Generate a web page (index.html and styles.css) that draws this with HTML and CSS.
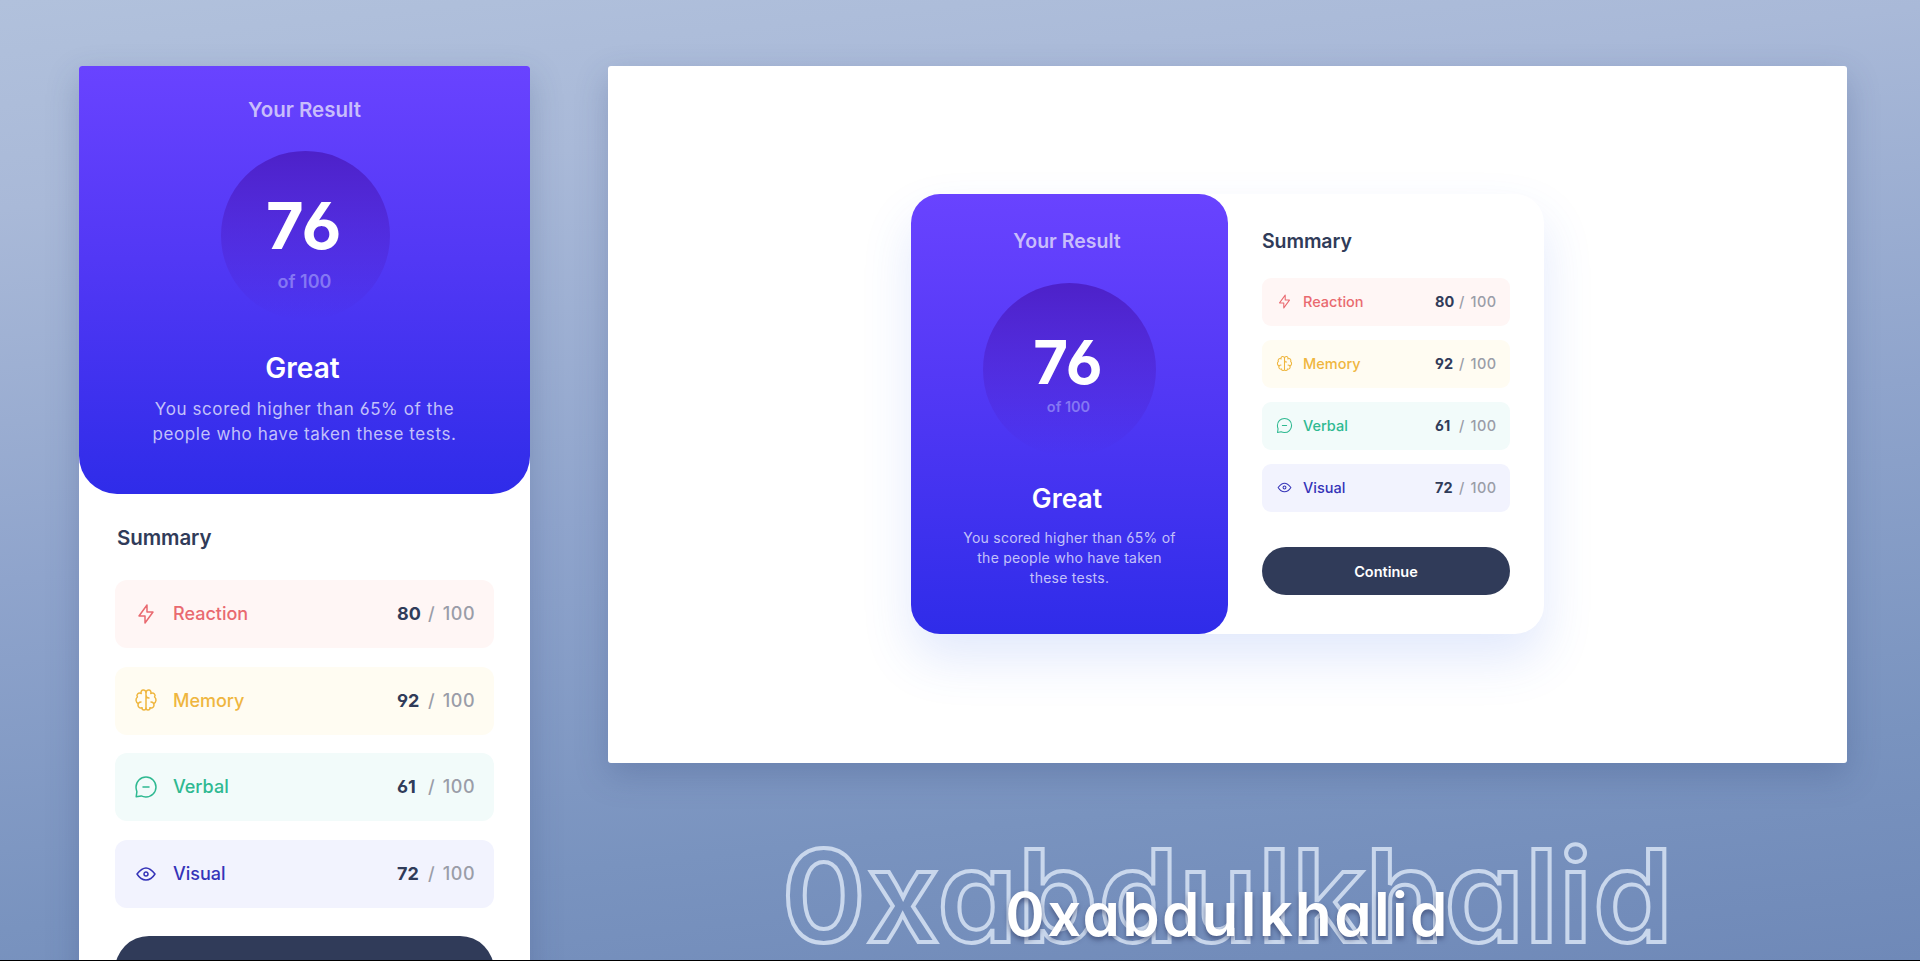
FILE: index.html
```html
<!DOCTYPE html>
<html lang="en">
<head>
<meta charset="utf-8">
<title>Results summary</title>
<link rel="stylesheet" href="styles.css">
</head>
<body>
<svg class="sprite" aria-hidden="true">
  <symbol id="reaction" viewBox="0 0 20 20"><path d="M10.833 8.333V2.5l-6.666 9.167h5V17.5l6.666-9.167h-5Z"/></symbol>
  <symbol id="memory" viewBox="0 0 20 20"><path d="M5.833 11.667a2.5 2.5 0 1 0 .834 4.858"/><path d="M3.553 13.004a3.333 3.333 0 0 1-.728-5.53m.025-.067a2.083 2.083 0 0 1 2.983-2.824m.199.054A2.083 2.083 0 1 1 10 3.75v12.917a1.667 1.667 0 0 1-3.333 0M10 5.833a2.5 2.5 0 0 0 2.5 2.5m1.667 3.334a2.5 2.5 0 1 1-.834 4.858"/><path d="M16.447 13.004a3.334 3.334 0 0 0 .728-5.53m-.025-.067a2.083 2.083 0 0 0-2.983-2.824M10 3.75a2.085 2.085 0 0 1 2.538-2.033 2.084 2.084 0 0 1 1.43 2.92m-.635 12.03a1.667 1.667 0 0 1-3.333 0"/></symbol>
  <symbol id="verbal" viewBox="0 0 20 20"><path d="M7.5 10h5M10 18.333A8.333 8.333 0 1 0 1.667 10c0 1.518.25 2.6.75 3.9l-.6 4.3 4.2-.75A8.295 8.295 0 0 0 10 18.333Z"/></symbol>
  <symbol id="visual" viewBox="0 0 20 20"><path d="M10 11.667a1.667 1.667 0 1 0 0-3.334 1.667 1.667 0 0 0 0 3.334Z"/><path d="M17.5 10c-1.574 2.492-4.402 5-7.5 5s-5.926-2.508-7.5-5C4.416 7.632 6.66 5 10 5s5.584 2.632 7.5 5Z"/></symbol>
</svg>
<div class="stage">
  <section class="mobile">
    <div class="result">
      <h2>Your Result</h2>
      <div class="score"><strong>76</strong><small>of 100</small></div>
      <h1>Great</h1>
      <p>You scored higher than 65% of the<br>people who have taken these tests.</p>
    </div>
    <div class="summary">
      <h3>Summary</h3>
      <ul>
        <li class="red"><svg><use href="#reaction"/></svg><span class="label">Reaction</span><b>80</b><i>/ 100</i></li>
        <li class="yellow"><svg><use href="#memory"/></svg><span class="label">Memory</span><b>92</b><i>/ 100</i></li>
        <li class="green"><svg><use href="#verbal"/></svg><span class="label">Verbal</span><b>61</b><i>/ 100</i></li>
        <li class="blue"><svg><use href="#visual"/></svg><span class="label">Visual</span><b>72</b><i>/ 100</i></li>
      </ul>
      <div class="button"></div>
    </div>
  </section>
  <div class="right">
    <section class="desktop">
      <div class="card">
        <div class="result">
          <h2>Your Result</h2>
          <div class="score"><strong>76</strong><small>of 100</small></div>
          <h1>Great</h1>
          <p>You scored higher than 65% of<br>the people who have taken<br>these tests.</p>
        </div>
        <div class="summary">
          <h3>Summary</h3>
          <ul>
            <li class="red"><svg><use href="#reaction"/></svg><span class="label">Reaction</span><b>80</b><i>/ 100</i></li>
            <li class="yellow"><svg><use href="#memory"/></svg><span class="label">Memory</span><b>92</b><i>/ 100</i></li>
            <li class="green"><svg><use href="#verbal"/></svg><span class="label">Verbal</span><b>61</b><i>/ 100</i></li>
            <li class="blue"><svg><use href="#visual"/></svg><span class="label">Visual</span><b>72</b><i>/ 100</i></li>
          </ul>
          <div class="button">Continue</div>
        </div>
      </div>
    </section>
    <div class="signature">
      <div class="outline">0xabdulkhalid</div>
      <div class="name">0xabdulkhalid</div>
    </div>
  </div>
</div>
</body>
</html>
```
FILE: styles.css
```css
* { box-sizing: border-box; margin: 0; padding: 0; }
body {
  width: 1920px;
  height: 961px;
  overflow: hidden;
  font-family: Inter, sans-serif;
  font-feature-settings: "ss01";
  background: #000;
}
.sprite { display: none; }
.stage {
  height: 960px;
  overflow: hidden;
  display: flex;
  gap: 78px;
  padding: 66px 73px 0 79px;
  background: linear-gradient(174deg, #b1c1dc 0%, #a9b9d8 18%, #8fa4cc 50%, #7993bf 80%, #6f89b8 100%);
}
.mobile {
  width: 451px;
  height: 1000px;
  flex: none;
  background: #fff;
  border-radius: 3px;
  overflow: hidden;
  box-shadow: 0 12px 32px rgba(50, 70, 120, .26);
}
.result {
  display: flex;
  flex-direction: column;
  align-items: center;
  text-align: center;
  color: #fff;
  background: linear-gradient(#6943ff, #5238f5 45%, #2f2ce9);
}
.result h2, .result h1, .summary h3 { font-weight: 600; }
.result h2 { color: #c8bdfb; }
.result p { color: #c3c1fa; white-space: nowrap; }
.score {
  display: flex;
  flex-direction: column;
  align-items: center;
  border-radius: 50%;
  background: linear-gradient(#4d21c9, rgba(37, 33, 201, 0));
}
.score strong { font-weight: 700; }
.score small { color: #8577f3; font-weight: 600; }
.summary h3 { color: #303b59; }
.summary ul { list-style: none; display: flex; flex-direction: column; }
.summary li { display: flex; align-items: center; font-weight: 500; }
.summary li svg {
  flex: none;
  fill: none;
  stroke: currentColor;
  stroke-width: 1.25;
  stroke-linecap: round;
  stroke-linejoin: round;
}
.label { flex: 1; }
.summary b { color: #303b59; font-weight: 700; }
.summary i { color: #9a9da8; font-style: normal; font-weight: 500; white-space: nowrap; }
.red { color: #e96a70; background: #fff6f5; }
.yellow { color: #efb63f; background: #fffcf2; }
.green { color: #2fb991; background: #f2fbfa; }
.blue { color: #3533b8; background: #f2f3fe; }
.button { background: #303b59; color: #fff; font-weight: 600; text-align: center; }

.mobile .result { height: 428px; border-radius: 0 0 38px 38px; padding-top: 29px; }
.mobile h2 { font-size: 20.5px; line-height: 30px; }
.mobile .score { width: 169px; height: 169px; margin: 26px 0 0 2px; padding: 40px 2px 0 0; }
.mobile .score strong { font-size: 65px; line-height: 70px; letter-spacing: 1.5px; }
.mobile .score small { font-size: 18px; line-height: 24px; margin-top: 9px; }
.mobile h1 { font-size: 28px; line-height: 36px; margin-top: 30px; padding-right: 4px; }
.mobile p { font-size: 17px; line-height: 25px; margin-top: 11px; letter-spacing: .6px; }
.mobile .summary { padding: 29px 36px 0; }
.mobile h3 { font-size: 20.5px; line-height: 30px; padding-left: 2px; letter-spacing: -.1px; }
.mobile ul { gap: 18.7px; margin-top: 27px; }
.mobile li { height: 68px; border-radius: 12px; padding: 0 0 1px 19px; font-size: 18px; }
.mobile li svg { width: 24px; height: 24px; margin-right: 15px; }
.mobile b { width: 31px; }
.mobile i { width: 66px; letter-spacing: .6px; word-spacing: 2px; }
.mobile .button { height: 68px; border-radius: 34px; margin-top: 28px; }

.right { width: 1239px; flex: none; }
.desktop {
  height: 697px;
  padding-top: 128px;
  background: #fff;
  border-radius: 3px;
  box-shadow: 0 12px 32px rgba(50, 70, 120, .26);
}
.card {
  display: flex;
  width: 633px;
  height: 440px;
  margin-left: 303px;
  border-radius: 29px;
  background: #fff;
  box-shadow: 0 25px 50px rgba(61, 108, 236, .15);
}
.card .result { width: 317px; border-radius: 29px; padding-top: 32px; }
.card h2 { font-size: 19.5px; line-height: 30px; padding-right: 5px; }
.card .score { width: 173px; height: 173px; margin-top: 27px; padding: 46px 2px 0 0; }
.card .score strong { font-size: 60px; line-height: 66px; letter-spacing: 1px; }
.card .score small { font-size: 14.5px; line-height: 20px; margin-top: 2px; }
.card h1 { font-size: 26.5px; line-height: 36px; margin-top: 24px; padding-right: 5px; }
.card p { font-size: 14px; line-height: 20px; margin-top: 12px; letter-spacing: .25px; }
.card .summary { flex: 1; padding: 32px 34px 0; }
.card h3 { font-size: 19.5px; line-height: 30px; letter-spacing: -.1px; }
.card ul { gap: 14px; margin-top: 22px; }
.card li { height: 48px; border-radius: 9px; padding: 0 0 1px 14px; font-size: 14.5px; }
.card li svg { width: 17px; height: 17px; margin-right: 10px; }
.card b { width: 24px; }
.card i { width: 51px; letter-spacing: .4px; word-spacing: 1.5px; }
.card .button { height: 48px; border-radius: 24px; margin-top: 35px; font-size: 14.5px; line-height: 49px; }

.signature {
  display: grid;
  justify-items: center;
  font-feature-settings: "cv11";
  white-space: nowrap;
}
.signature > div { grid-area: 1 / 1; }
.outline {
  font-size: 128px;
  line-height: 160px;
  margin-top: 53px;
  font-weight: 600;
  letter-spacing: .6px;
  color: transparent;
  -webkit-text-stroke: 4px #c9d7ec;
}
.name {
  font-size: 60px;
  line-height: 72px;
  margin-top: 115px;
  font-weight: 600;
  letter-spacing: 2.3px;
  color: #fff;
  text-shadow: 0 3px 5px rgba(40, 50, 90, .55);
}
```
